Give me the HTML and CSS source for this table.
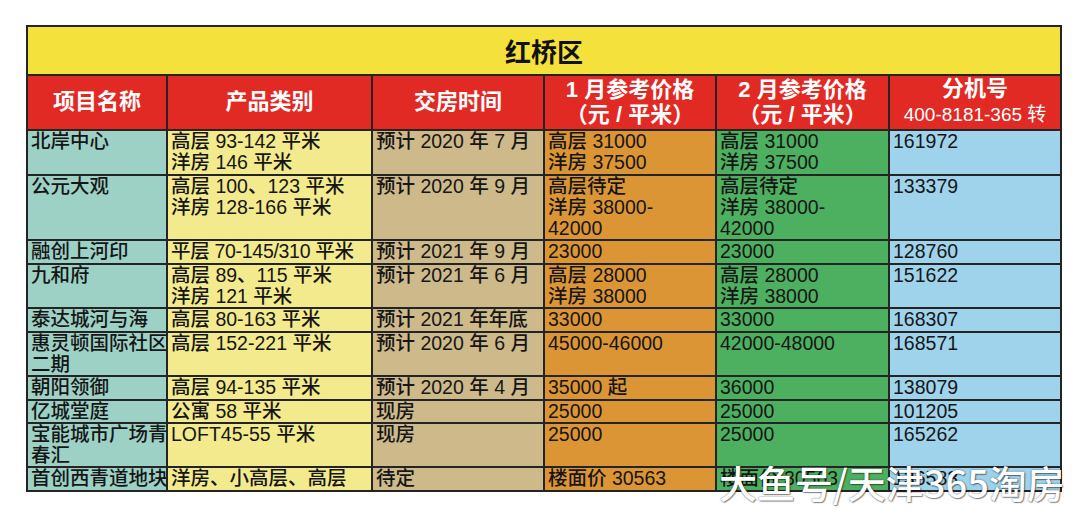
FILE: index.html
```html
<!DOCTYPE html>
<html lang="zh">
<head>
<meta charset="utf-8">
<link rel="stylesheet" href="styles.css">
</head>
<body>
<div class="page">
  <table class="price">
    <colgroup>
      <col class="w1"><col class="w2"><col class="w3"><col class="w4"><col class="w5"><col class="w6">
    </colgroup>
    <thead>
      <tr><th colspan="6" class="title">红桥区</th></tr>
      <tr class="head">
        <th>项目名称</th>
        <th>产品类别</th>
        <th>交房时间</th>
        <th>1 月参考价格<br>（元 / 平米）</th>
        <th>2 月参考价格<br>（元 / 平米）</th>
        <th>分机号<br><span class="sub">400-8181-365 转</span></th>
      </tr>
    </thead>
    <tbody>
      <tr><td>北岸中心</td><td>高层 93-142 平米<br>洋房 146 平米</td><td>预计 2020 年 7 月</td><td>高层 31000<br>洋房 37500</td><td>高层 31000<br>洋房 37500</td><td>161972</td></tr>
      <tr><td>公元大观</td><td>高层 100、123 平米<br>洋房 128-166 平米</td><td>预计 2020 年 9 月</td><td>高层待定<br>洋房 38000-<br>42000</td><td>高层待定<br>洋房 38000-<br>42000</td><td>133379</td></tr>
      <tr><td>融创上河印</td><td class="nowrap">平层 70-145/310 平米</td><td>预计 2021 年 9 月</td><td>23000</td><td>23000</td><td>128760</td></tr>
      <tr><td>九和府</td><td>高层 89、115 平米<br>洋房 121 平米</td><td>预计 2021 年 6 月</td><td>高层 28000<br>洋房 38000</td><td>高层 28000<br>洋房 38000</td><td>151622</td></tr>
      <tr><td>泰达城河与海</td><td>高层 80-163 平米</td><td>预计 2021 年年底</td><td>33000</td><td>33000</td><td>168307</td></tr>
      <tr><td>惠灵顿国际社区<br>二期</td><td>高层 152-221 平米</td><td>预计 2020 年 6 月</td><td>45000-46000</td><td>42000-48000</td><td>168571</td></tr>
      <tr><td>朝阳领御</td><td>高层 94-135 平米</td><td>预计 2020 年 4 月</td><td>35000 起</td><td>36000</td><td>138079</td></tr>
      <tr><td>亿城堂庭</td><td>公寓 58 平米</td><td>现房</td><td>25000</td><td>25000</td><td>101205</td></tr>
      <tr><td>宝能城市广场青<br>春汇</td><td>LOFT45-55 平米</td><td>现房</td><td>25000</td><td>25000</td><td>165262</td></tr>
      <tr><td>首创西青道地块</td><td>洋房、小高层、高层</td><td>待定</td><td>楼面价 30563</td><td>楼面价 30563</td><td>136583</td></tr>
    </tbody>
  </table>
  <div class="watermark">大鱼号/天津365淘房</div>
</div>
</body>
</html>
```

FILE: styles.css
```css
html, body {
  margin: 0;
  background: #ffffff;
}
.page {
  position: relative;
  width: 1080px;
  height: 527px;
  padding: 25px 0 0 26px;
  box-sizing: border-box;
  font-family: "Liberation Sans", "Noto Sans CJK SC", sans-serif;
}
.price {
  border-collapse: collapse;
  table-layout: fixed;
  width: 1034px;
  border: 2px solid #222;
}
.w1 { width: 140px; }
.w2 { width: 205px; }
.w3 { width: 172px; }
.w4 { width: 172px; }
.w5 { width: 173px; }
.w6 { width: 172px; }

.price th, .price td {
  border: 2px solid #242424;
}
.title {
  background: #f4e13b;
  color: #111;
  font-size: 26px;
  font-weight: 700;
  height: 47px;
  padding: 0;
  text-align: center;
  vertical-align: middle;
}
.head th {
  background: #e22a25;
  color: #fff;
  font-size: 22px;
  font-weight: 700;
  line-height: 25px;
  height: 50px;
  padding: 0 0 2px;
  text-align: center;
  vertical-align: middle;
}
.head .sub {
  font-size: 19px;
  font-weight: 400;
  line-height: 24px;
}
.price td {
  font-size: 19.5px;
  font-weight: 500;
  line-height: 21.3px;
  color: #161616;
  padding: 0 0 0 3px;
  vertical-align: top;
  white-space: nowrap;
  overflow: hidden;
}
.price td:nth-child(1) { background: #9dd1c6; }
.price td:nth-child(2) { background: #f2ea8c; }
.price td:nth-child(3) { background: #cdb98a; }
.price td:nth-child(4) { background: #dc9535; }
.price td:nth-child(5) { background: #4daf60; }
.price td:nth-child(6) { background: #9fd3ec; }
.price td.nowrap { letter-spacing: -0.3px; }

.watermark {
  position: absolute;
  left: 719px;
  top: 459px;
  font-size: 38px;
  line-height: 46px;
  color: #fff;
  font-family: "Noto Sans CJK SC", sans-serif;
  font-weight: 500;
  text-shadow: 0 0 2px rgba(0,0,0,0.55), 1px 1px 1px rgba(0,0,0,0.4);
  white-space: nowrap;
}
```
